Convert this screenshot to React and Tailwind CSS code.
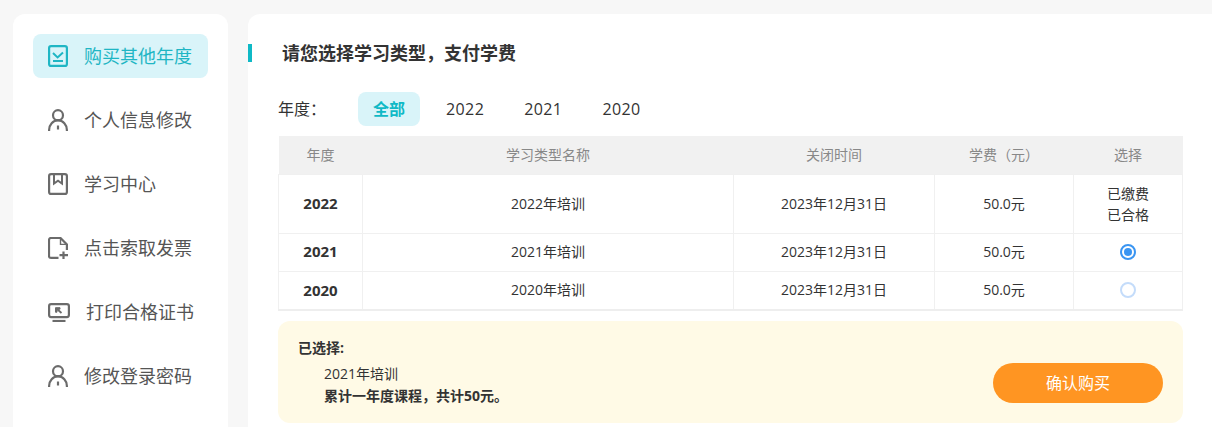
const CheckIcon = ({ className }) => (
  <svg viewBox="0 0 20 22" className={className} fill="none" stroke="currentColor" strokeWidth="2.2">
    <rect x="1.1" y="1.1" width="17.8" height="19.8" rx="2" />
    <path d="M5 8l4.6 4.4L15 7.5" strokeWidth="2" />
    <path d="M5 16h10" strokeWidth="2" />
  </svg>
);

const UserIcon = ({ className }) => (
  <svg viewBox="0 0 20 22" className={className} fill="none" stroke="currentColor" strokeWidth="2.2">
    <circle cx="10" cy="6.2" r="5" />
    <path d="M1.1 22v-1C1.1 15.5 5 11.4 10 11.4s8.9 4.1 8.9 9.6v1" />
    <path d="M10 16.5v4" />
  </svg>
);

const BookIcon = ({ className }) => (
  <svg viewBox="0 0 20 22" className={className} fill="none" stroke="currentColor" strokeWidth="2.2">
    <rect x="1.1" y="1.1" width="17.8" height="19.8" rx="2" />
    <path d="M6 1v9.5l4-2.8 4 2.8V1" strokeWidth="2" />
  </svg>
);

const InvoiceIcon = ({ className }) => (
  <svg viewBox="0 0 20 22" className={className} fill="none" stroke="currentColor" strokeWidth="2.2">
    <path d="M10.5 20.9H3a2 2 0 0 1-2-2V3a2 2 0 0 1 2-2h9.5l6.4 6.4V13" />
    <path d="M12.5 1v6.4h6.4" strokeWidth="1.4" />
    <path d="M15.5 14.5v7.5M11.5 18.2H20" />
  </svg>
);

const ScreenIcon = ({ className }) => (
  <svg viewBox="0 0 22 19" className={className} fill="none" stroke="currentColor" strokeWidth="2.2">
    <rect x="1.1" y="1.1" width="19.8" height="13" rx="2" />
    <path d="M4.5 18h13" />
    <path d="M7.5 4.7h4.5v1.5H9v3H7.5z" fill="currentColor" stroke="currentColor" strokeWidth="1" />
    <path d="M9 6l4.5 4" strokeWidth="1.8" />
  </svg>
);

const menu = [
  { label: "购买其他年度", icon: CheckIcon, size: "h-[22px] w-5", active: true },
  { label: "个人信息修改", icon: UserIcon, size: "h-[22px] w-5" },
  { label: "学习中心", icon: BookIcon, size: "h-[22px] w-5" },
  { label: "点击索取发票", icon: InvoiceIcon, size: "h-[22px] w-5" },
  { label: "打印合格证书", icon: ScreenIcon, size: "h-[19px] w-[22px]" },
  { label: "修改登录密码", icon: UserIcon, size: "h-[22px] w-5" },
];

const rows = [
  { year: "2022", name: "2022年培训", height: "h-[59px]", paid: true },
  { year: "2021", name: "2021年培训", height: "h-[38px]", checked: true },
  { year: "2020", name: "2020年培训", height: "h-[39px]" },
];

export default function App() {
  return (
    <div
      className="flex h-[427px] w-[1212px] overflow-hidden bg-[#f7f7f7] pl-[13px] pt-[14px] text-[#333]"
      style={{ fontFamily: '"Open Sans", "Noto Sans CJK SC", sans-serif' }}
    >
      {/* Sidebar */}
      <div className="h-[440px] w-[215px] shrink-0 rounded-t-xl bg-white px-5 pt-5">
        {menu.map((item) => {
          const Icon = item.icon;
          return (
            <div
              key={item.label}
              className={
                item.active
                  ? "mb-5 flex h-11 items-center rounded-lg bg-[#d9f4f9] pl-[15px] text-[#1fb6c4]"
                  : "mb-5 flex h-11 items-center rounded-lg pl-[15px] text-[#555]"
              }
            >
              <span className={item.active ? "shrink-0" : "shrink-0 text-[#6b6b6b]"}>
                <Icon className={item.size} />
              </span>
              <span className="ml-4 text-[18px]">{item.label}</span>
            </div>
          );
        })}
      </div>

      {/* Main */}
      <div className="ml-5 h-[440px] flex-1 rounded-tl-xl bg-white pt-[30px]">
        <div className="flex h-[18px] items-center">
          <div className="h-[18px] w-1 bg-[#0fb9c6]" />
          <h2 className="ml-[30px] text-[18px] font-bold text-[#333]">请您选择学习类型，支付学费</h2>
        </div>

        <div className="mt-[30px] flex h-[34px] items-center pl-[30px] text-base">
          <span className="w-20">年度：</span>
          <span className="flex h-[34px] w-[62px] items-center justify-center rounded-lg bg-[#d9f4f9] font-bold text-[#0fb9c6]">
            全部
          </span>
          <span className="ml-[26px] tracking-[0.4px]">2022</span>
          <span className="ml-[40px] tracking-[0.4px]">2021</span>
          <span className="ml-[40px] tracking-[0.4px]">2020</span>
        </div>

        <div className="ml-[30px] mt-2.5 w-[905px]">
          <table className="w-[904px] table-fixed border-collapse border-b-2 border-[#eeeeee] text-sm">
            <colgroup>
              <col className="w-[84px]" />
              <col className="w-[371px]" />
              <col className="w-[201px]" />
              <col className="w-[139px]" />
              <col className="w-[109px]" />
            </colgroup>
            <thead>
              <tr className="h-[38px] bg-[#f1f1f1] text-[#888]">
                <th className="font-normal">年度</th>
                <th className="font-normal">学习类型名称</th>
                <th className="font-normal">关闭时间</th>
                <th className="font-normal">学费（元）</th>
                <th className="font-normal">选择</th>
              </tr>
            </thead>
            <tbody>
              {rows.map((row) => (
                <tr key={row.year} className={`${row.height} text-center`}>
                  <td className="border border-[#f0f0f0] text-[15px] font-bold">{row.year}</td>
                  <td className="border border-[#f0f0f0]">{row.name}</td>
                  <td className="border border-[#f0f0f0]">2023年12月31日</td>
                  <td className="border border-[#f0f0f0]">50.0元</td>
                  <td className="border border-[#f0f0f0] leading-[21px]">
                    {row.paid ? (
                      <>
                        已缴费
                        <br />
                        已合格
                      </>
                    ) : row.checked ? (
                      <span className="mx-auto flex h-4 w-4 items-center justify-center rounded-full border-2 border-[#3a95f2]">
                        <span className="h-2 w-2 rounded-full bg-[#3a95f2]" />
                      </span>
                    ) : (
                      <span className="mx-auto block h-4 w-4 rounded-full border-2 border-[#c4dcfa]" />
                    )}
                  </td>
                </tr>
              ))}
            </tbody>
          </table>

          {/* Summary */}
          <div className="mt-2.5 flex h-[102px] items-end justify-between rounded-xl bg-[#fffae6] pb-5 pl-5 pr-5 text-sm">
            <div className="self-start pt-[17px] leading-[20px]">
              <div className="font-bold">已选择:</div>
              <div className="ml-[26px] mt-[6px]">2021年培训</div>
              <div className="ml-[26px] mt-[2px] font-bold">累计一年度课程，共计50元。</div>
            </div>
            <button className="h-10 w-[170px] rounded-full bg-[#ff9522] text-base text-white">确认购买</button>
          </div>
        </div>
      </div>
    </div>
  );
}
